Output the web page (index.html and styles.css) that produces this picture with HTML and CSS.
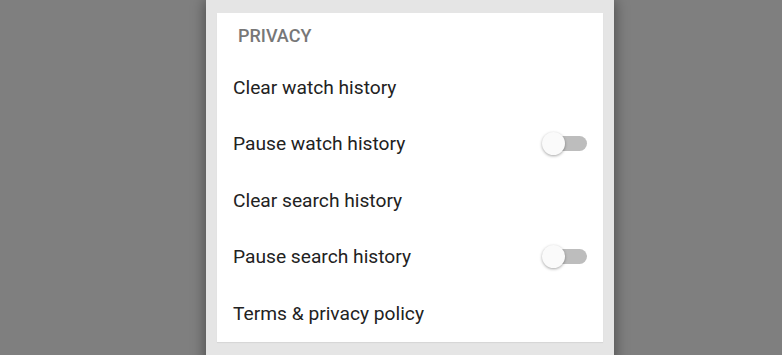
FILE: index.html
```html
<!DOCTYPE html>
<html lang="en">
<head>
  <meta charset="UTF-8">
  <meta name="viewport" content="width=device-width, initial-scale=1.0">
  <title>Privacy settings</title>
  <link rel="stylesheet" href="styles.css">
</head>
<body>
  <div class="panel">
    <div class="card">
      <div class="header">PRIVACY</div>
      <div class="row">Clear watch history</div>
      <div class="row">
        <span>Pause watch history</span>
        <span class="switch"><span class="knob"></span></span>
      </div>
      <div class="row">Clear search history</div>
      <div class="row">
        <span>Pause search history</span>
        <span class="switch"><span class="knob"></span></span>
      </div>
      <div class="row">Terms &amp; privacy policy</div>
    </div>
  </div>
</body>
</html>
```

FILE: styles.css
```css
html, body {
  height: 100%;
}
body {
  margin: 0;
  background-color: #7f7f7f;
  font-family: Roboto, "Noto Sans", Arial, sans-serif;
  overflow: hidden;
}
.panel {
  margin-left: 206px;
  width: 386px;
  height: 100%;
  padding: 13px 11px 0 11px;
  background-color: #e5e5e5;
  box-shadow: 0 0 14px rgba(0, 0, 0, 0.45);
}
.card {
  background: #fff;
  box-shadow: 0 1px 1px rgba(0, 0, 0, 0.06);
}
.header {
  height: 46px;
  line-height: 46px;
  padding-left: 21px;
  font-size: 18px;
  font-weight: 500;
  color: #777;
}
.row {
  height: 56.5px;
  display: flex;
  align-items: center;
  justify-content: space-between;
  padding: 0 16px;
  font-size: 19.2px;
  color: #222;
}
.switch {
  position: relative;
  width: 36px;
  height: 15px;
  border-radius: 8px;
  background-color: #bdbdbd;
}
.knob {
  position: absolute;
  left: -9px;
  top: -4px;
  width: 23px;
  height: 23px;
  border-radius: 50%;
  background-color: #fafafa;
  box-shadow: 0 1px 3px rgba(0, 0, 0, 0.35);
}
```
